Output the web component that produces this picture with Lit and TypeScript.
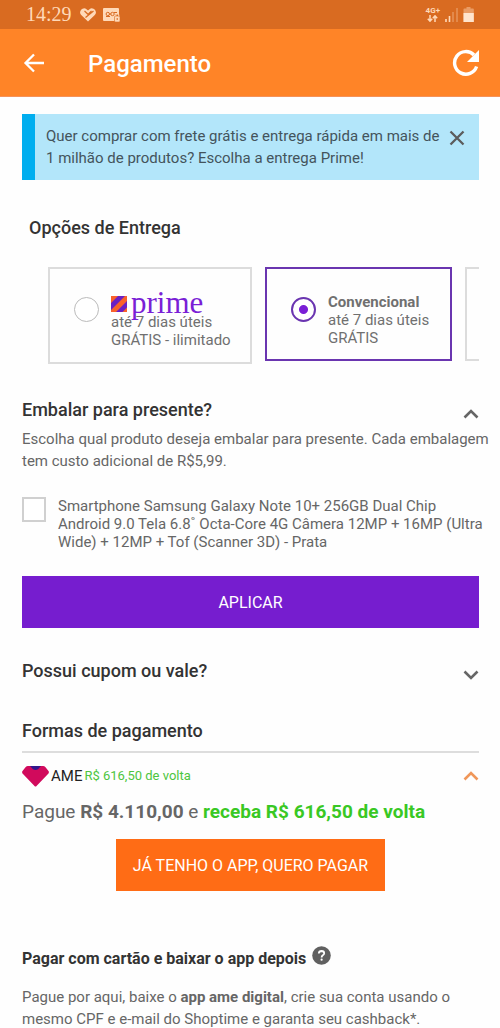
import { LitElement, html, css, svg } from "lit";
import { customElement, property, state } from "lit/decorators.js";

const chevron = (up: boolean) => html`
  <svg class="chevron" viewBox="0 0 16 10" width="16" height="10" aria-hidden="true">
    ${svg`<path d=${up ? "M1.5 8.5 8 2l6.500 6.500" : "M1.500 1.500 8 8l6.500-6.500"} fill="none" stroke="currentColor" stroke-width="2.600" />`}
  </svg>
`;

@customElement("status-bar")
class StatusBar extends LitElement {
  static styles = css`
    :host {
      display: flex;
      align-items: center;
      height: 29px;
      box-sizing: border-box;
      padding: 0 25px 0 26px;
      background: #d96b21;
      color: #ffd9b8;
    }
    .clock {
      font: 20px/29px "Liberation Serif", serif;
      margin-right: 8px;
    }
    .left {
      display: flex;
      align-items: center;
      gap: 7px;
      flex: 1;
    }
    .right {
      display: flex;
      align-items: center;
      gap: 5px;
    }
    svg {
      display: block;
    }
    .network {
      display: grid;
      justify-items: center;
      font: 700 8px/8px Roboto, sans-serif;
    }
  `;

  render() {
    return html`
      <span class="clock">14:29</span>
      <div class="left">
        <svg width="16" height="14" viewBox="0 0 16 14" aria-hidden="true">
          <path d="M8 13.500 1.200 7A3.900 3.900 0 0 1 .8 2.200 3.900 3.900 0 0 1 6.500 1.200L8 2.600l1.500-1.400a3.900 3.900 0 0 1 5.700 1A3.900 3.900 0 0 1 14.800 7Z" fill="#ffd9b8" />
          <path d="M4.500 3 8 6.300l3.500-3.500M5.500 9.500 13.500 3" fill="none" stroke="#d96b21" stroke-width="1.200" />
        </svg>
        <svg width="17" height="14" viewBox="0 0 17 14" aria-hidden="true">
          <path d="M0 1a1 1 0 0 1 1-1h14a1 1 0 0 1 1 1v5.500h-4V13H1a1 1 0 0 1-1-1Z" fill="#ffd9b8" />
          <g fill="none" stroke="#d96b21" stroke-width="1">
            <circle cx="4.800" cy="6" r="1.700" />
            <circle cx="9.500" cy="6" r="1.700" />
            <path d="M6.500 6H8M3 8.500h4M11 4.500h3" />
          </g>
          <rect x="11.500" y="8" width="5.500" height="6" rx="1" fill="#ffd9b8" stroke="#d96b21" stroke-width=".6" />
          <path d="M12.800 8V7a1.500 1.500 0 0 1 3 0v1" fill="none" stroke="#ffd9b8" />
          <path d="M14.200 10v2" stroke="#d96b21" />
        </svg>
      </div>
      <div class="right">
        <div class="network">
          <span>4G+</span>
          <svg width="11" height="7" viewBox="0 0 11 7" aria-hidden="true">
            <path d="M3 0v6M.8 3.800 3 6.200l2.200-2.400M8 7V1M5.800 3.200 8 .8l2.200 2.400" fill="none" stroke="#ffd9b8" stroke-width="1.500" />
          </svg>
        </div>
        <svg width="13" height="14" viewBox="0 0 13 14" aria-hidden="true">
          <path d="M1 11v3M4.500 8v6" stroke="#ffd9b8" stroke-width="1.600" />
          <path d="M8 4v10M12 0v14" stroke="#ffd9b8" stroke-opacity=".4" stroke-width="1.400" />
        </svg>
        <svg width="12" height="15" viewBox="0 0 12 15" aria-hidden="true">
          <path d="M3.500 0h4v1.500H10a.8.8 0 0 1 .8.800V15H.5V2.300a.8.8 0 0 1 .8-.8h2.200Z" fill="#ffd9b8" fill-opacity=".45" />
          <path d="M.5 6h10.300v9H.5Z" fill="#ffe4cd" />
        </svg>
      </div>
    `;
  }
}

@customElement("top-bar")
class TopBar extends LitElement {
  static styles = css`
    :host {
      display: flex;
      align-items: center;
      height: 68px;
      box-sizing: border-box;
      padding: 1px 20px 0 23px;
      background: #ff8427;
      border-bottom: 1px solid #f5925a;
      color: #fff;
    }
    button {
      display: block;
      padding: 0;
      border: 0;
      background: none;
      color: inherit;
      cursor: pointer;
    }
    svg {
      display: block;
    }
    h1 {
      flex: 1;
      margin: 2px 0 0 43px;
      font: 500 24px/32px Roboto, sans-serif;
    }
  `;

  render() {
    return html`
      <button type="button" aria-label="Voltar">
        <svg width="22" height="20" viewBox="0 0 22 20">
          <path d="M21 10H3M11 1.500 2.500 10l8.500 8.500" fill="none" stroke="currentColor" stroke-width="2.300" />
        </svg>
      </button>
      <h1>Pagamento</h1>
      <button type="button" aria-label="Atualizar">
        <svg width="28" height="28" viewBox="0 0 28 28">
          <path d="M24.600 17.500A11.300 11.300 0 1 1 22 6" fill="none" stroke="currentColor" stroke-width="3.400" />
          <path d="M27 1v12H15Z" fill="currentColor" />
        </svg>
      </button>
    `;
  }
}

@customElement("delivery-option")
class DeliveryOption extends LitElement {
  @property() value = "";
  @property({ type: Boolean, reflect: true }) checked = false;

  static styles = css`
    :host {
      display: block;
      flex: none;
      box-sizing: border-box;
    }
    .card {
      display: flex;
      align-items: flex-start;
      gap: 12px;
      box-sizing: border-box;
      height: 100%;
      padding: 24px 24px 12px;
      border: 2px solid #dcdcdc;
      color: #707070;
      font: 15px/18px Roboto, sans-serif;
      cursor: pointer;
    }
    :host([checked]) .card {
      border-color: #6a35b0;
    }
    input {
      appearance: none;
      flex: none;
      box-sizing: border-box;
      width: 25px;
      height: 25px;
      margin: 4px 0 0;
      border: 1px solid #bbb;
      border-radius: 50%;
      background: #fff;
    }
    input:checked {
      border: 2px solid #6a35b0;
      background: radial-gradient(circle, #7a1fd6 0 4px, #fff 5px);
    }
  `;

  render() {
    return html`
      <label class="card">
        <input
          type="radio"
          .value=${this.value}
          .checked=${this.checked}
          @change=${() => this.dispatchEvent(new CustomEvent("pick", { detail: this.value }))}
        />
        <span><slot></slot></span>
      </label>
    `;
  }
}

@customElement("app-root")
class AppRoot extends LitElement {
  @state() delivery = "convencional";
  @state() giftOpen = true;
  @state() noticeOpen = true;

  static styles = css`
    :host {
      display: block;
      min-height: 100vh;
      background: #fefefe;
      color: #666;
      font: 15px/22px Roboto, sans-serif;
    }
    main {
      padding: 17px 21px 0 22px;
    }
    h2,
    h3,
    p {
      margin: 0;
    }
    h2 {
      color: #333;
      font-size: 18px;
      font-weight: 500;
      line-height: 24px;
    }
    button {
      border: 0;
      font-family: inherit;
      cursor: pointer;
    }
    svg {
      display: block;
    }
    .notice {
      display: flex;
      align-items: flex-start;
      justify-content: space-between;
      padding: 11px 14px 11px 11px;
      border-left: 13px solid #00aeef;
      background: #b3e6fa;
      color: #44545c;
    }
    .close {
      flex: none;
      margin-top: 5px;
      padding: 0;
      background: none;
      color: #5c5c5c;
    }
    .delivery-title {
      padding: 36px 7px 27px;
    }
    .options {
      display: flex;
      align-items: flex-start;
      gap: 13px;
      overflow: hidden;
      padding-left: 26px;
    }
    .prime {
      width: 204px;
      height: 97px;
    }
    .standard {
      width: 187px;
      height: 94px;
    }
    .brand {
      display: flex;
      align-items: center;
      gap: 4px;
      height: 20px;
      color: #7a1fd6;
      font: 31px/20px "Liberation Serif", serif;
    }
    .brand svg {
      flex: none;
      margin-top: 2px;
    }
    .line {
      display: block;
      white-space: nowrap;
    }
    .row {
      display: flex;
      align-items: center;
      justify-content: space-between;
      width: 100%;
      padding: 0;
      background: none;
      color: #666;
      text-align: left;
    }
    .gift-head {
      margin-top: 34px;
      margin-bottom: 6px;
    }
    .gift-head .chevron {
      margin-top: 8px;
    }
    .gift-text,
    .product {
      margin-right: -12px;
    }
    .coupon {
      margin: 31px 0 36px;
    }
    .coupon .chevron {
      margin-top: 8px;
    }
    .product {
      display: flex;
      align-items: flex-start;
      gap: 12px;
      margin-top: 25px;
      margin-bottom: 25px;
      line-height: 18px;
    }
    .product input {
      appearance: none;
      flex: none;
      box-sizing: border-box;
      width: 24px;
      height: 25px;
      margin: 0;
      border: 2px solid #d0d0d0;
      background: #fff;
    }
    .product input:checked {
      background: #7a1fd6;
    }
    .apply,
    .pay {
      display: block;
      height: 52px;
      color: #fff;
      font-size: 16px;
    }
    .apply {
      width: 100%;
      background: #761dcf;
    }
    .pay {
      margin: 14px auto 0;
      padding: 0 17px;
      background: #ff6c15;
    }
    .ame {
      margin-top: 8px;
      padding: 12px 0;
      border-top: 2px solid #ddd;
    }
    .ame .chevron {
      color: #f0975a;
    }
    .ame-name {
      display: flex;
      align-items: center;
      gap: 2px;
      color: #222;
      font-size: 15px;
      line-height: 22px;
    }
    .cash {
      color: #4dc540;
      font-size: 13px;
    }
    .total {
      font-size: 19px;
      line-height: 26px;
    }
    .total .green {
      color: #39c824;
    }
    .card-title {
      display: flex;
      align-items: flex-start;
      gap: 6px;
      margin: 55px 0 14px;
    }
    h3 {
      color: #333;
      font-size: 16px;
      font-weight: 700;
      line-height: 26px;
    }
  `;

  render() {
    return html`
      <status-bar></status-bar>
      <top-bar></top-bar>
      <main>
        ${this.noticeOpen
          ? html`<div class="notice">
              <p>Quer comprar com frete grátis e entrega rápida em mais de 1 milhão de produtos? Escolha a entrega Prime!</p>
              <button class="close" type="button" aria-label="Fechar" @click=${() => (this.noticeOpen = false)}>
                <svg width="16" height="16" viewBox="0 0 16 16">
                  <path d="m1.500 1.500 13 13m0-13-13 13" stroke="currentColor" stroke-width="2.300" />
                </svg>
              </button>
            </div>`
          : null}

        <h2 class="delivery-title">Opções de Entrega</h2>
        <div class="options" role="radiogroup">
          <delivery-option class="prime" value="prime" ?checked=${this.delivery === "prime"} @pick=${this.pick}>
            <span class="brand">
              <svg width="16" height="16" viewBox="0 0 16 16" aria-hidden="true">
                <path d="M0 0h16v16H0Z" fill="#f9612b" />
                <path d="M7 0h7L0 14V7ZM16 5v6.500L11.500 16H5Z" fill="#6a1fc4" />
              </svg>
              prime
            </span>
            <span class="line">até 7 dias úteis</span>
            <span class="line">GRÁTIS - ilimitado</span>
          </delivery-option>
          <delivery-option class="standard" value="convencional" ?checked=${this.delivery === "convencional"} @pick=${this.pick}>
            <b class="line">Convencional</b>
            <span class="line">até 7 dias úteis</span>
            <span class="line">GRÁTIS</span>
          </delivery-option>
          <delivery-option class="standard" value="outra" ?checked=${this.delivery === "outra"} @pick=${this.pick}></delivery-option>
        </div>

        <button class="row gift-head" type="button" aria-expanded=${this.giftOpen} @click=${() => (this.giftOpen = !this.giftOpen)}>
          <h2>Embalar para presente?</h2>
          ${chevron(this.giftOpen)}
        </button>
        ${this.giftOpen
          ? html`<p class="gift-text">Escolha qual produto deseja embalar para presente. Cada embalagem tem custo adicional de R$5,99.</p>
              <label class="product">
                <input type="checkbox" />
                <span>Smartphone Samsung Galaxy Note 10+ 256GB Dual Chip Android 9.0 Tela 6.8˚ Octa-Core 4G Câmera 12MP + 16MP (Ultra Wide) + 12MP + Tof (Scanner 3D) - Prata</span>
              </label>
              <button class="apply" type="button">APLICAR</button>`
          : null}

        <button class="row coupon" type="button" aria-expanded="false">
          <h2>Possui cupom ou vale?</h2>
          ${chevron(false)}
        </button>

        <h2>Formas de pagamento</h2>
        <button class="row ame" type="button" aria-expanded="true">
          <span class="ame-name">
            <svg width="27" height="21" viewBox="0 0 27 21" aria-hidden="true">
              <path d="M6 0h15q1.500 0 2.500 1.200L26.500 5q1 1.500-.5 3L14.500 20q-1 1-2 0L1 8Q-.5 6.500.5 5l3-3.800Q4.500 0 6 0Z" fill="#d10a5c" />
              <path d="M8 0h11l-3 3.300q-2.500 1.600-5 0Z" fill="#32168c" />
            </svg>
            AME <span class="cash">R$ 616,50 de volta</span>
          </span>
          ${chevron(true)}
        </button>
        <p class="total">Pague <b>R$ 4.110,00</b> e <b class="green">receba R$ 616,50 de volta</b></p>
        <button class="pay" type="button">JÁ TENHO O APP, QUERO PAGAR</button>

        <div class="card-title">
          <h3>Pagar com cartão e baixar o app depois</h3>
          <svg width="19" height="19" viewBox="0 0 19 19" aria-hidden="true">
            <circle cx="9.500" cy="9.500" r="9.300" fill="#606060" />
            <path d="M6.800 7.500Q7 5 9.600 5q2.600.1 2.600 2.300 0 1.200-1.400 2-1.200.8-1.200 2.200" fill="none" stroke="#fff" stroke-width="1.800" />
            <circle cx="9.600" cy="13.700" r="1.100" fill="#fff" />
          </svg>
        </div>
        <p>Pague por aqui, baixe o <b>app ame digital</b>, crie sua conta usando o mesmo CPF e e-mail do Shoptime e garanta seu cashback*.</p>
      </main>
    `;
  }

  private pick(event: CustomEvent) {
    this.delivery = event.detail;
  }
}
